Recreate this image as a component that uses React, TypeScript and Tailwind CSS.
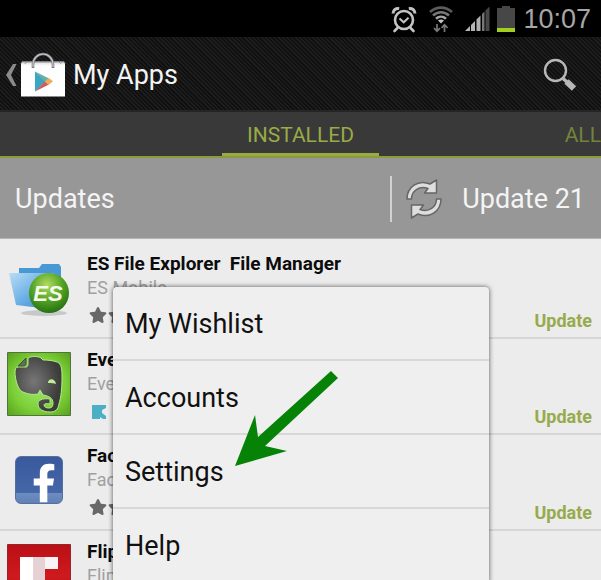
import type { ReactNode } from "react";
import { FaFacebookF, FaStar } from "react-icons/fa";

type AppItem = {
  name: string;
  author: string;
  icon: ReactNode;
  installed?: boolean;
};

const tabs = [
  { label: "INSTALLED", active: true },
  { label: "ALL", active: false },
];

const menuItems = ["My Wishlist", "Accounts", "Settings", "Help"];

const apps: AppItem[] = [
  { name: "ES File Explorer  File Manager", author: "ES Mobile", icon: <EsIcon /> },
  { name: "Evernote", author: "Evernote Corp.", icon: <EvernoteIcon />, installed: true },
  { name: "Facebook", author: "Facebook", icon: <FacebookIcon /> },
  { name: "Flipboard", author: "Flipboard", icon: <FlipboardIcon /> },
];

function AlarmIcon() {
  return (
    <svg viewBox="0 0 26 28" className="h-7 w-[26px]" fill="none" stroke="#c4c4c4">
      <circle cx="13" cy="15" r="9" strokeWidth="2.6" />
      <path d="M8.5 13.5l4.2 3.8 4.8-4.6" strokeWidth="2" />
      <path d="M2 8.5c0-3.5 3-5.5 6.2-4.9M24 8.5c0-3.5-3-5.5-6.2-4.9" strokeWidth="3" />
      <path d="M6.5 23l-3 3M19.5 23l3 3" strokeWidth="2.6" strokeLinecap="round" />
    </svg>
  );
}

function WifiIcon() {
  return (
    <svg viewBox="0 0 24 28" className="h-7 w-6" fill="none">
      <path d="M1 7C7.5 1.2 16.5 1.2 23 7" stroke="#5c5c5c" strokeWidth="2.6" />
      <path d="M4 10.5c4.8-4.4 11.2-4.4 16 0" stroke="#777" strokeWidth="2.6" />
      <path d="M7 13.7c3-2.7 7-2.7 10 0" stroke="#a5a5a5" strokeWidth="2.6" />
      <path d="M9 15.5c2-1.3 4-1.3 6 0l-3 3z" fill="#c4c4c4" />
      <path d="M8 19v7M5 23.2l3 3 3-3M15.5 27v-7M12.5 22.8l3-3 3 3" stroke="#777" strokeWidth="1.7" />
    </svg>
  );
}

function SignalIcon() {
  return (
    <svg viewBox="0 0 26 26" className="h-[26px] w-[26px]">
      <path d="M0 25l5-5v5z" fill="#b5b5b5" />
      <path d="M6 25v-6l4-4v10z" fill="#b5b5b5" />
      <path d="M11.5 25V13.5l4-4V25z" fill="#b0b0b0" />
      <path d="M17 25V8l2.5-2.5V25z" fill="#777" />
      <path d="M20.5 25V4.5l4-4V25z" fill="#484848" />
    </svg>
  );
}

function BatteryIcon() {
  return (
    <svg viewBox="0 0 18 28" className="h-7 w-[18px]">
      <path d="M5 1h8v2h5v24H0V3h5z" fill="#474747" />
      <path d="M0 23h18v4H0z" fill="#a2cf1f" />
    </svg>
  );
}

function PlayBagIcon() {
  return (
    <svg viewBox="0 0 46 46" className="h-[46px] w-[46px]">
      <defs>
        <linearGradient id="bag" x1="0" y1="0" x2="0" y2="1">
          <stop offset="0" stopColor="#d8d8dc" />
          <stop offset=".12" stopColor="#fdfdfd" />
          <stop offset="1" stopColor="#fff" />
        </linearGradient>
      </defs>
      <path d="M2 9.5h42l1 2v33H1v-33z" fill="url(#bag)" />
      <path d="M1 11.5l2-2 2 2 2-1.5h32l2 1.5 2-2 2 2" stroke="#8d8d92" fill="none" />
      <path d="M13 16v-3.5a10 10.5 0 0 1 20 0V16" fill="none" stroke="#77777b" strokeWidth="2.6" />
      <path d="M13 15v-2.5a10 10.5 0 0 1 20 0V15" fill="none" stroke="#c9c9cc" strokeWidth="1.2" />
      <path d="M15 19.5v20l10.5-10z" fill="#3ba5c4" />
      <path d="M15 19.5l14 7-4 3.5z" fill="#68aea4" />
      <path d="M15 39.5l10-10 4 3z" fill="#d05a5c" />
      <path d="M25 29.5l3.8-3.5 4.2 3.2-4.5 3.8z" fill="#efaa5a" />
    </svg>
  );
}

function SearchIcon() {
  return (
    <svg viewBox="0 0 34 34" className="h-[34px] w-[34px]" fill="none" stroke="#b7b7b7">
      <circle cx="12.5" cy="12.5" r="10.5" strokeWidth="2.4" />
      <path d="M20 20.5l4 3.5" strokeWidth="3.5" />
      <path d="M23.5 23.5l7.5 7" strokeWidth="6.2" />
    </svg>
  );
}

function RefreshIcon() {
  return (
    <svg viewBox="0 0 36 40" className="h-10 w-9" strokeLinejoin="round">
      <g fill="#dedede" stroke="#666" strokeWidth="1.5">
        <path d="M1 20C1 8 12 0 24 5L30.5 1v13H18.5l3.5-4.500C13 6.500 5.500 12 5.500 20z" />
        <path d="M35 20c0 12-11 20-23 15L5.500 39V26h12L14 30.500c9 3 16.500-2.500 16.500-10.500z" />
      </g>
    </svg>
  );
}

function EsIcon() {
  return (
    <svg viewBox="0 0 64 64" className="h-16 w-16">
      <defs>
        <linearGradient id="folder" x1="0" y1="0" x2="1" y2="1">
          <stop offset="0" stopColor="#b9ddf6" />
          <stop offset=".6" stopColor="#5fa9e2" />
          <stop offset="1" stopColor="#3583c8" />
        </linearGradient>
        <radialGradient id="ball" cx=".45" cy=".3" r=".75">
          <stop offset="0" stopColor="#b2dd62" />
          <stop offset=".5" stopColor="#57a526" />
          <stop offset="1" stopColor="#1e6a10" />
        </radialGradient>
      </defs>
      <ellipse cx="37" cy="57" rx="23" ry="3" fill="#c6c8ca" />
      <path d="M12 12h20l3-4h17l2 3v30H12z" fill="#4798d4" />
      <path d="M2 17h45l-5 36-33-4z" fill="url(#folder)" />
      <circle cx="42" cy="37" r="20" fill="url(#ball)" />
      <text
        x="41"
        y="45"
        textAnchor="middle"
        fill="#f4faee"
        fontFamily="Liberation Sans, sans-serif"
        fontSize="22"
        fontStyle="italic"
        fontWeight="bold"
      >
        ES
      </text>
    </svg>
  );
}

function EvernoteIcon() {
  return (
    <svg viewBox="0 0 64 64" className="h-16 w-16">
      <defs>
        <radialGradient id="leaf" cx=".5" cy=".5" r=".7">
          <stop offset="0" stopColor="#a5e870" />
          <stop offset=".6" stopColor="#7cd038" />
          <stop offset="1" stopColor="#58a01c" />
        </radialGradient>
        <radialGradient id="hide" cx=".4" cy=".45" r=".55">
          <stop offset="0" stopColor="#777" />
          <stop offset="1" stopColor="#3c3d3b" />
        </radialGradient>
      </defs>
      <path d="M.5.5h63v63H.5z" fill="url(#leaf)" stroke="#52733a" />
      <path
        d="M21 6c3-2 10-2 13 0l2 2c6 0 13 1 16 3 3 3 3 8 3 14 0 12-1 20-3 27-1 6-4 8-9 8-7 0-12-3-12-8 0-4 4-6 12-5v5c-4-1-6 0-6 1 0 2 2 3 5 3 3 0 4-2 4-5 0-5-4-7-10-8l-3-5-2 4c-5 1-12 0-17-3-4-4-6-13-6-19 0-3 1-5 3-5h8c1 0 2-1 2-3z"
        fill="url(#hide)"
        stroke="#b5ea8a"
        strokeLinejoin="round"
      />
      <path d="M11 14l8-8v6c0 1-1 2-2 2z" fill="#5e7154" stroke="#42503b" />
      <path d="M41 31c0-5 7-5 8 1-2-1-5-1-8-1z" fill="#c0ec98" />
    </svg>
  );
}

function FacebookIcon() {
  return (
    <div className="flex h-12 w-12 items-end justify-end overflow-hidden rounded-md border border-[#566f9f] bg-[linear-gradient(#39599d_0%,#4667a7_78%,#6d8dc2_79%,#6180b6_100%)] pr-1.5">
      <FaFacebookF className="h-10 w-6 shrink-0 text-white" />
    </div>
  );
}

function FlipboardIcon() {
  return (
    <svg viewBox="0 0 64 64" className="h-16 w-16">
      <defs>
        <linearGradient id="flip" x1="0" y1="0" x2="0" y2="1">
          <stop offset="0" stopColor="#b90f15" />
          <stop offset=".5" stopColor="#cf1a1e" />
          <stop offset="1" stopColor="#a00a10" />
        </linearGradient>
      </defs>
      <path d="M.5.5h63v63H.5z" fill="url(#flip)" stroke="#97262a" />
      <path d="M13 13h38v12H13z" fill="#f8f3f4" />
      <path d="M26 13h12v25H26z" fill="#e6d2d5" />
      <path d="M13 13h13v38H13z" fill="#fff" />
    </svg>
  );
}

function StatusBar() {
  return (
    <div className="flex h-[37px] items-center justify-end bg-black pr-[10px]">
      <AlarmIcon />
      <div className="ml-3">
        <WifiIcon />
      </div>
      <div className="ml-3">
        <SignalIcon />
      </div>
      <div className="ml-1.5">
        <BatteryIcon />
      </div>
      <time className="ml-2 font-['Liberation_Sans',sans-serif] text-[27px] leading-9 text-[#a6a6a6]">
        10:07
      </time>
    </div>
  );
}

function ActionBar() {
  return (
    <header className="flex h-[75px] items-center justify-between border-b-2 border-[#252525] bg-[#161616] bg-[repeating-linear-gradient(45deg,#0f0f0f_0px,#0f0f0f_1px,#1e1e1e_2px,#1e1e1e_3px)] pt-0.5 pr-6 pl-1.5">
      <div className="flex items-center">
        <button type="button" aria-label="Back" className="flex items-center">
          <svg viewBox="0 0 12 22" className="h-[22px] w-3" fill="#8b8b8b">
            <path d="M7 0h3.500L5 11l5.500 11H7L0 11z" />
          </svg>
          <span className="ml-0.5">
            <PlayBagIcon />
          </span>
        </button>
        <h1 className="ml-[7px] text-[27px] leading-8 text-[#f3f3f3]">My Apps</h1>
      </div>
      <button type="button" aria-label="Search">
        <SearchIcon />
      </button>
    </header>
  );
}

function TabBar() {
  return (
    <nav className="flex h-[46px] items-end justify-between border-b-2 border-[#8a9c3b] bg-[#393939] pl-[222px] text-[21px]">
      {tabs.map((tab) => (
        <a
          key={tab.label}
          href="#"
          className={
            tab.active
              ? "flex h-full w-[157px] items-center justify-center border-b-[3px] border-[#98ab45] pt-1.5 text-[#98ab45]"
              : "flex h-full items-center pt-1.5 pb-[3px] text-[#72833b]"
          }
        >
          {tab.label}
        </a>
      ))}
    </nav>
  );
}

function UpdatesBar() {
  return (
    <div className="flex h-[81px] items-center justify-between border-b border-[#b5b5b5] bg-[#979797] pt-0.5 pr-4 pl-[15px] text-[27px] leading-8 text-[#f4f4f4]">
      <h2>Updates</h2>
      <button type="button" className="flex h-[46px] items-center border-l-2 border-[#d2d2d2] pl-3.5">
        <RefreshIcon />
        <span className="ml-5">Update 21</span>
      </button>
    </div>
  );
}

function AppRow({ app }: { app: AppItem }) {
  return (
    <li className="flex h-24 border-b-2 border-[#d6d6d6] pr-[9px] pl-[7px]">
      <div className="mt-[13px] flex h-16 w-16 shrink-0 items-center justify-center">{app.icon}</div>
      <div className="mt-[9px] ml-4 flex-1">
        <h3 className="text-[19px] leading-6 font-bold whitespace-pre text-[#0c0c0c]">{app.name}</h3>
        <p className="text-lg leading-6 text-[#a0a0a0]">{app.author}</p>
        {app.installed ? (
          <p className="mt-1 ml-[5px] flex items-center gap-1.5 text-lg leading-6 text-[#4bb0c5]">
            <svg viewBox="0 0 15 14" className="h-3.5 w-[15px]" fill="#4bb0c5">
              <path d="M0 0h14v3l-4 2v3l4 3v3h-3l-3-2v2H0z" />
            </svg>
            Installed
          </p>
        ) : (
          <p className="mt-1.5 ml-0.5 flex gap-px text-lg text-[#686868]" aria-label="4 stars">
            <FaStar />
            <FaStar />
            <FaStar />
            <FaStar />
          </p>
        )}
      </div>
      <button type="button" className="mt-[66px] h-6 text-lg leading-6 font-bold text-[#98aa4c]">
        Update
      </button>
    </li>
  );
}

function OverflowMenu() {
  return (
    <div
      role="menu"
      className="absolute top-12 right-28 left-[113px] rounded-t-sm bg-[#efefef] shadow-[0_0_5px_rgba(0,0,0,0.65)]"
    >
      {menuItems.map((item) => (
        <button
          key={item}
          type="button"
          role="menuitem"
          className="block h-[74px] w-full border-b-2 border-[#d8d8d8] pt-0.5 pl-3 text-left text-[27px] leading-8 text-[#111]"
        >
          {item}
        </button>
      ))}
      <svg viewBox="0 0 104 96" className="absolute top-[84px] left-[122px] h-24 w-[104px]">
        <path d="M96 0l7 7-73 68 22 5L0 95l20-51 3 22z" fill="#068206" />
      </svg>
    </div>
  );
}

export default function App() {
  return (
    <div className="flex h-screen flex-col overflow-hidden bg-[#ececec] font-[Roboto,sans-serif]">
      <StatusBar />
      <ActionBar />
      <TabBar />
      <UpdatesBar />
      <main className="relative min-h-0 flex-1">
        <ul className="pt-1">
          {apps.map((app) => (
            <AppRow key={app.name} app={app} />
          ))}
        </ul>
        <OverflowMenu />
      </main>
    </div>
  );
}
